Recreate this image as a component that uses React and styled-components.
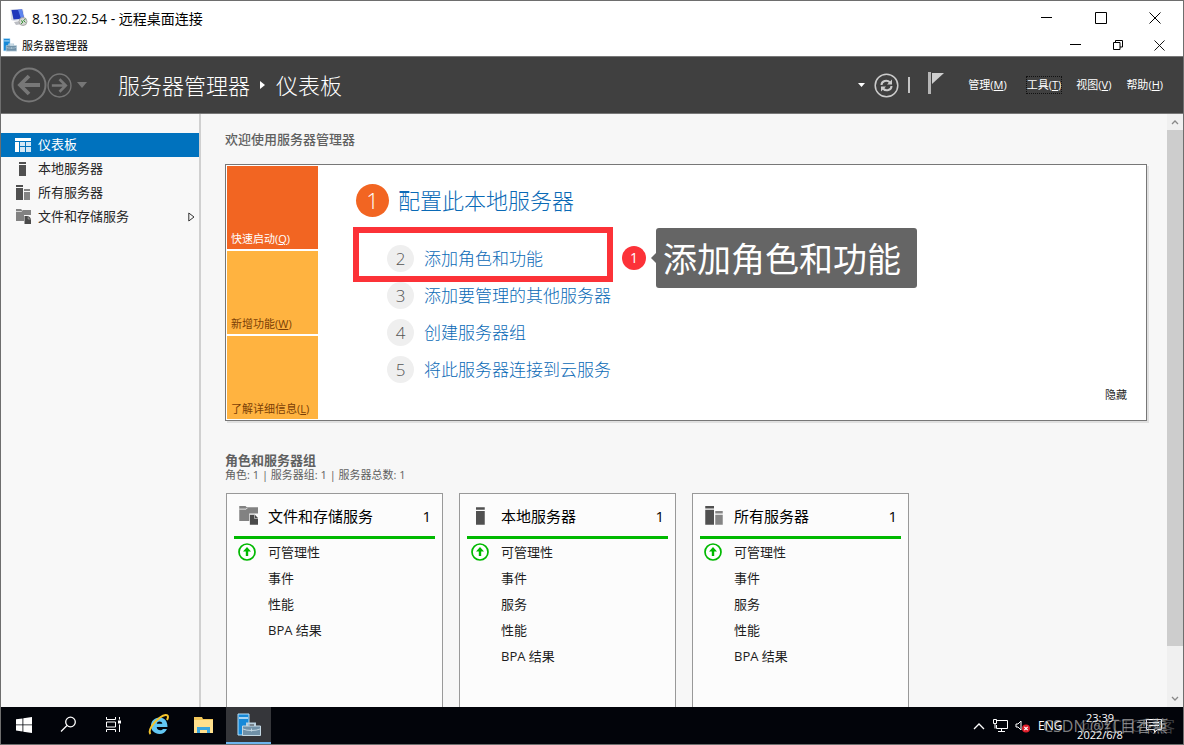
import React from 'react';
import styled, { createGlobalStyle, css } from 'styled-components';

const GlobalStyle = createGlobalStyle`
  *, *::before, *::after { box-sizing: border-box; }
  body {
    margin: 0;
    background: #f7f7f7;
    color: #1e1e1e;
    font-family: "Open Sans", "Noto Sans CJK SC", sans-serif;
    font-size: 13px;
  }
  button {
    border: 0;
    padding: 0;
    background: none;
    color: inherit;
    font: inherit;
    cursor: pointer;
  }
  a { color: inherit; text-decoration: none; }
  svg { display: block; flex: none; }
  h1, h2, h3, p, ul, ol { margin: 0; padding: 0; font-weight: 400; }
  ul, ol { list-style: none; }
`;

/* ---------- window frame ---------- */

const Window = styled.div`
  display: flex;
  flex-direction: column;
  height: 100vh;
  border: 1px solid #6e6e6e;
  overflow: hidden;
`;

const TitleBar = styled.div`
  display: flex;
  align-items: center;
  flex: none;
  height: 34px;
  padding: 0 22px 1px 8px;
  gap: 4px;
  background: #fff;
  color: #000;
  font-size: 14px;
`;

const AppBar = styled(TitleBar)`
  height: 21px;
  padding: 0 18px 1px 2px;
  gap: 5px;
  font-size: 11px;
`;

const WindowButtons = styled.div`
  display: flex;
  align-items: center;
  gap: ${(p) => p.$gap};
  margin-left: auto;
`;

/* ---------- dark header ---------- */

const Header = styled.header`
  display: flex;
  align-items: center;
  flex: none;
  height: 58px;
  padding: 0 20px 0 10px;
  border-top: 1px solid #777;
  border-bottom: 1px solid #777;
  background: #404040;
  color: #fff;
`;

const HistoryButtons = styled.div`
  display: flex;
  align-items: center;
`;

const Breadcrumb = styled.h1`
  display: flex;
  align-items: center;
  gap: 10px;
  margin-left: 31px;
  font-size: 22px;
  line-height: 32px;
  font-weight: 300;
`;

const HeaderTools = styled.div`
  display: flex;
  align-items: center;
  gap: 9px;
  margin-left: auto;
`;

const Divider = styled.span`
  width: 2px;
  height: 16px;
  background: #c4c4c4;
`;

const FlagButton = styled.button`
  margin: 0 15px 4px 9px;
`;

const Menu = styled.nav`
  display: flex;
  gap: 15px;
`;

const MenuButton = styled.button`
  font-size: 11px;
  line-height: 16px;
  outline: ${(p) => (p.$focused ? '1px dotted #111' : 'none')};
  margin-left: ${(p) => (p.$focused ? '5px' : '0')};
`;

/* ---------- body ---------- */

const Body = styled.div`
  display: flex;
  flex: 1;
  min-height: 0;
`;

const Sidebar = styled.nav`
  flex: none;
  width: 200px;
  padding-top: 19px;
  border-right: 2px solid #d0d0d0;
  background: #f8f8f8;
`;

const NavLink = styled.a`
  display: flex;
  align-items: center;
  gap: 7px;
  height: 24px;
  padding: 0 4px 0 14px;
  background: ${(p) => (p.$active ? '#0072be' : 'transparent')};
  color: ${(p) => (p.$active ? '#fff' : '#262626')};
  > svg:last-child { margin-left: auto; }
`;

const NavLabel = styled.span`
  padding-bottom: 2px;
  line-height: 20px;
`;

const Main = styled.main`
  display: flex;
  flex: 1;
  flex-direction: column;
  min-width: 0;
  padding: 16px 20px 0 24px;
`;

const SectionTitle = styled.h2`
  color: #606060;
  font-size: 13px;
  line-height: 18px;
  font-weight: ${(p) => (p.$bold ? 700 : 500)};
`;

const Summary = styled.p`
  color: #606060;
  font-size: 11px;
  line-height: 12px;
`;

const Welcome = styled.section`
  display: flex;
  flex: none;
  margin: 16px 0 30px;
  padding: 1px;
  border: 1px solid #777;
  box-shadow: 2px 2px 0 #e0e0e0;
  background: #fff;
`;

const Tiles = styled.div`
  display: flex;
  flex: none;
  flex-direction: column;
  gap: 2px;
  width: 91px;
`;

const Tile = styled.button`
  display: flex;
  align-items: flex-end;
  height: 83px;
  padding: 0 4px 2px;
  background: ${(p) => (p.$active ? '#f26522' : '#ffb340')};
  color: ${(p) => (p.$active ? '#fff' : '#7b3f06')};
  font-size: 11px;
  line-height: 16px;
`;

const Steps = styled.ol`
  flex: 1;
  padding: 16px 0 0 38px;
`;

const Step = styled.li`
  position: relative;
  display: flex;
  align-items: center;
  gap: ${(p) => (p.$primary ? '9px' : '10px')};
  height: ${(p) => (p.$primary ? '36px' : '37px')};
  margin-left: ${(p) => (p.$primary ? '0' : '31px')};
  margin-bottom: ${(p) => (p.$primary ? '22px' : '0')};
`;

const StepNumber = styled.span`
  display: flex;
  align-items: center;
  justify-content: center;
  flex: none;
  border-radius: 50%;
  font-weight: 300;
  ${(p) =>
    p.$primary
      ? css`
          width: 33px;
          height: 33px;
          background: #f26522;
          color: #fff;
          font-size: 22px;
        `
      : css`
          width: 27px;
          height: 27px;
          background: #efefef;
          color: #555;
          font-size: 17px;
        `}
`;

const StepLink = styled.a`
  color: #0a6ab6;
  font-size: ${(p) => (p.$primary ? '22px' : '17px')};
  line-height: 32px;
  font-weight: 300;
`;

const HideButton = styled.button`
  align-self: flex-end;
  margin: 0 18px 16px 0;
  font-size: 11px;
  line-height: 16px;
`;

/* ---------- annotation over the second step ---------- */

const Highlight = styled.span`
  position: absolute;
  top: -13px;
  left: -34px;
  width: 260px;
  height: 55px;
  border: 6px solid #fc3238;
  pointer-events: none;
`;

const Callout = styled.div`
  position: absolute;
  top: -12px;
  left: 235px;
  display: flex;
  align-items: center;
  pointer-events: none;
`;

const CalloutNumber = styled.span`
  width: 24px;
  height: 24px;
  margin-right: 5px;
  border-radius: 50%;
  background: #fc3238;
  color: #fff;
  font-size: 14px;
  line-height: 23px;
  text-align: center;
`;

const CalloutArrow = styled.span`
  border: 5px solid transparent;
  border-left: 0;
  border-right-color: #656565;
`;

const CalloutText = styled.span`
  height: 60px;
  padding: 0 16px 0 7px;
  border-radius: 3px;
  background: #656565;
  color: #fff;
  font-size: 34px;
  line-height: 62px;
  white-space: nowrap;
`;

/* ---------- role cards ---------- */

const Cards = styled.div`
  display: flex;
  flex: 1;
  gap: 16px;
  min-height: 0;
  margin: 12px 0 0 1px;
`;

const Card = styled.section`
  width: 217px;
  padding: 0 7px;
  border: 1px solid #999;
  border-bottom: 0;
  background: #fcfcfc;
`;

const CardHeader = styled.header`
  display: flex;
  align-items: center;
  height: 45px;
  padding: 2px 4px 0;
  border-bottom: 3px solid #00b900;
  color: #000;
  font-size: 15px;
  line-height: 20px;
`;

const IconSlot = styled.span`
  display: flex;
  flex: none;
  width: 30px;
`;

const CardTitle = styled.h3`
  flex: 1;
  font-size: 15px;
`;

const CardRow = styled.li`
  display: flex;
  align-items: center;
  height: 26px;
  padding-left: 4px;
  line-height: 20px;
`;

/* ---------- scroll bar ---------- */

const ScrollBar = styled.div`
  display: flex;
  flex: none;
  flex-direction: column;
  width: 16px;
  background: #f0f0f0;
`;

const ScrollArrow = styled.button`
  display: flex;
  align-items: center;
  justify-content: center;
  height: 16px;
`;

const ScrollTrack = styled.div`
  flex: 1;
`;

const ScrollThumb = styled.div`
  height: 92%;
  background: #cdcdcd;
`;

/* ---------- task bar ---------- */

const TaskBar = styled.footer`
  position: relative;
  display: flex;
  flex: none;
  height: 37px;
  background: #02040a;
  color: #fff;
`;

const TaskButton = styled.button`
  display: flex;
  align-items: center;
  justify-content: center;
  width: 45px;
  border-bottom: 2px solid ${(p) => (p.$active ? '#6cb5ee' : 'transparent')};
  background: ${(p) => (p.$active ? '#35363a' : 'transparent')};
`;

const Tray = styled.div`
  display: flex;
  align-items: center;
  gap: 7px;
  margin-left: auto;
  padding-right: 20px;
  font-size: 12px;
`;

const Language = styled.span`
  width: 26px;
`;

const Clock = styled.div`
  display: flex;
  flex-direction: column;
  align-items: center;
  width: 58px;
  font-size: 11px;
  line-height: 17px;
`;

const TrayNotice = styled.span`
  margin-left: 10px;
`;

const Watermark = styled.span`
  position: absolute;
  top: 7px;
  right: ${(p) => p.$right};
  color: ${(p) => p.$tone};
  font-size: 16px;
  line-height: 24px;
  white-space: nowrap;
  pointer-events: none;
`;

/* ---------- icons ---------- */

const MinimizeIcon = () => (
  <svg width="12" height="12" viewBox="0 0 12 12"><path d="M0 5.5H11" stroke="#000" /></svg>
);
const MaximizeIcon = () => (
  <svg width="12" height="12" viewBox="0 0 12 12"><path d="M.5.5h11v11H.5z" fill="none" stroke="#000" /></svg>
);
const RestoreIcon = () => (
  <svg width="10" height="10" viewBox="0 0 10 10">
    <path d="M.5 2.500h6.500v7H.5zM2.500 2.500V.5h7v6.500H7" fill="none" stroke="#000" />
  </svg>
);
const CloseIcon = ({ size }) => (
  <svg width={size} height={size} viewBox="0 0 12 12"><path d="M.5.5l11 11M11.500.5l-11 11" stroke="#000" fill="none" /></svg>
);

const RemoteIcon = () => (
  <svg width="19" height="19" viewBox="0 0 19 19">
    <path d="M1.500 1.500L14 1l2 10.500-11 1.500-3-1z" fill="#d9dce6" />
    <path d="M2.500 2l10.500-.5 2 9-10.500 1z" fill="#2037bb" />
    <path d="M9 1.700l4-.2 2 9-3 .3z" fill="#5d84ee" />
    <path d="M5 14l6-1 2 3-6 1z" fill="#bcbec4" />
    <circle cx="14" cy="13.500" r="4" fill="#d4d7d3" stroke="#999" strokeWidth=".8" />
    <path d="M12 12.500l2 1.500-2 2M16.500 11l-2 1.500 2 2" stroke="#40973e" fill="none" />
  </svg>
);

const ServerManagerIcon = ({ size }) => (
  <svg width={size} height={size} viewBox="0 0 24 24">
    <path d="M1 1h11v21H1z" fill="#1689d8" stroke="#b8dff7" />
    <path d="M2 5h9" stroke="#d8effd" strokeWidth="1.500" />
    <path d="M10 13V10.500h8V13" fill="none" stroke="#b9d0de" strokeWidth="2" />
    <path d="M5.500 13h18v9.500h-18z" fill="#7091a8" stroke="#c3d7e2" />
    <path d="M6 16c4 2 13 2 17 0M14.500 15.500v3" fill="none" stroke="#c3d7e2" />
  </svg>
);

const CircleArrow = ({ size, flip, color }) => (
  <svg width={size} height={size} viewBox="0 0 36 36">
    <circle cx="18" cy="18" r="16.500" fill="none" stroke={color} strokeWidth="2" />
    <path
      d={flip ? 'M7 18h20M18 9l9 9-9 9' : 'M29 18H9M18 9l-9 9 9 9'}
      fill="none" stroke={color} strokeWidth="3.800"
    />
  </svg>
);

const Caret = ({ color, size = 8 }) => (
  <svg width={size} height={size > 8 ? 6 : 4} viewBox="0 0 8 5" preserveAspectRatio="none">
    <path d="M0 0h8L4 5z" fill={color} />
  </svg>
);

const HistoryCaret = styled.button`
  margin-left: 5px;
`;

const RefreshIcon = () => (
  <svg width="25" height="25" viewBox="0 0 25 25" fill="none" stroke="#ccc">
    <circle cx="12.500" cy="12.500" r="11.300" strokeWidth="1.500" />
    <path d="M7.500 12c0-4 5.500-6 8.500-2.500M17.500 13c0 4-5.500 6-8.500 2.500" strokeWidth="2" />
    <path d="M18 6.500v5h-5zM7 18.500v-5h5z" fill="#ccc" stroke="none" />
  </svg>
);

const FlagIcon = () => (
  <svg width="16" height="23" viewBox="0 0 16 23">
    <path d="M0 0h3v22H0z" fill="#b5b5b5" /><path d="M4 1h12L4 12z" fill="#cfcfcf" />
  </svg>
);

const DashboardIcon = () => (
  <svg width="16" height="16" viewBox="0 0 16 16" fill="#fff">
    <path d="M0 1h16v3H0zM0 5h4v10H0z" />
    <path d="M5 5h5v4H5zM11 5h5v4h-5zM5 10h5v5H5zM11 10h5v5h-5z" fill="#d5e8f5" />
  </svg>
);
const ServerIcon = ({ size = 16 }) => (
  <svg width={size} height={size} viewBox="0 0 16 16" fill="#505050">
    <path d="M4 1h7v2H4zM4 4h7v11H4z" />
  </svg>
);
const ServersIcon = ({ size = 16 }) => (
  <svg width={size} height={size} viewBox="0 0 16 16">
    <path d="M1 0h7v2H1zM1 3h7v12H1z" fill="#505050" />
    <path d="M9 4h6v2H9zM9 7h6v8H9z" fill="#858585" />
  </svg>
);
const StorageIcon = ({ size = 16 }) => (
  <svg width={size} height={size} viewBox="0 0 16 16">
    <path d="M1 0h5l1 1h9v5H9v6H1z" fill="#828282" />
    <path d="M1 2.500h5.500l1-1" fill="none" stroke="#e8e8e8" strokeWidth=".8" />
    <path d="M9.500 7h4l2.500 2.500V15H9.500z" fill="#4a4a4a" />
    <path d="M13.200 7v3H16" fill="none" stroke="#ddd" strokeWidth=".5" />
  </svg>
);
const ExpandIcon = () => (
  <svg width="7" height="10" viewBox="0 0 7 10"><path d="M.8 1v8L6 5z" fill="none" stroke="#333" /></svg>
);
const BreadcrumbArrow = () => (
  <svg width="6" height="8" viewBox="0 0 6 8"><path d="M0 0l5 4-5 4z" fill="#fff" /></svg>
);
const UpIcon = () => (
  <svg width="18" height="18" viewBox="0 0 18 18">
    <circle cx="9" cy="9" r="8" fill="#fff" stroke="#00b900" strokeWidth="1.700" />
    <path d="M9 4l4 4.500h-2.800V13H7.800V8.500H5z" fill="#00b900" />
  </svg>
);
const Chevron = ({ down }) => (
  <svg width="8" height="6" viewBox="0 0 8 6">
    <path d={down ? 'M1 1l3 3 3-3' : 'M1 5l3-3 3 3'} fill="none" stroke="#888" strokeWidth="1.300" />
  </svg>
);

const WindowsIcon = () => (
  <svg width="16" height="16" viewBox="0 0 16 16" fill="#fff">
    <path d="M0 2.300L6.500 1.400v6.100H0zM7.300 1.300L16 0v7.500H7.300zM0 8.300h6.500v6.200L0 13.600zM7.300 8.300H16V16l-8.700-1.300z" />
  </svg>
);
const SearchIcon = () => (
  <svg width="17" height="17" viewBox="0 0 17 17" fill="none" stroke="#fff" strokeWidth="1.300">
    <circle cx="10.500" cy="6" r="4.800" /><path d="M7 9.500l-6 6" />
  </svg>
);
const TaskViewIcon = () => (
  <svg width="16" height="15" viewBox="0 0 16 15" fill="none" stroke="#fff">
    <path d="M.5 0v2.500h9V0M.5 5h9v5h-9zM.5 15v-2.500h9V15M13.500 0v2.500M13.500 7.500V15" />
    <path d="M12 3.500h3v3h-3z" fill="#fff" stroke="none" />
  </svg>
);
const ExplorerIcon = () => (
  <svg width="21" height="18" viewBox="0 0 21 18">
    <path d="M1 1h8l1 2h10v14H1z" fill="#f2c75a" />
    <path d="M1 4h19v13H1z" fill="#ffe08d" />
    <path d="M4 17v-6h13v6h-3v-3H7v3z" fill="#39a6df" />
  </svg>
);
const BrowserIcon = () => (
  <svg width="22" height="22" viewBox="0 0 22 22" fill="none">
    <path d="M19 15c-1.300 3-4 5-7.500 5C6.500 20 3 16.500 3 11.800S6.500 3.500 11.500 3.500s8 3.500 8 9.500H8.700c.3 4 5 4 6.300 2z" fill="#62c7f3" />
    <path d="M8.800 9.800c.3-3 5.200-3 5.500 0z" fill="#02040a" />
    <path d="M2.500 20c-3-3 3-12 9.500-16.500 4-2.700 8-3.500 8-.5 0 1-.5 2-1 3" stroke="#f4c52d" strokeWidth="2" />
  </svg>
);

const TrayUpIcon = () => (
  <svg width="12" height="8" viewBox="0 0 12 8"><path d="M1 7l5-5 5 5" fill="none" stroke="#fff" strokeWidth="1.300" /></svg>
);
const NetworkIcon = () => (
  <svg width="16" height="14" viewBox="0 0 16 14" fill="none" stroke="#fff">
    <path d="M5 1.500h10.500v8H4.500V6M9.500 9.500v3M6 12.500h7M1.500.5h3v4h-3zM3 4.500v5" />
  </svg>
);
const VolumeIcon = () => (
  <svg width="16" height="14" viewBox="0 0 16 14">
    <path d="M1 5h2l3-3v9L3 8H1z" fill="none" stroke="#fff" />
    <circle cx="11" cy="9.500" r="4" fill="#df1f2b" />
    <path d="M9.300 7.800l3.400 3.400M12.700 7.800l-3.400 3.400" stroke="#fff" strokeWidth="1.200" />
  </svg>
);
const NotificationIcon = () => (
  <svg width="17" height="16" viewBox="0 0 17 16" fill="none" stroke="#fff">
    <path d="M.5 1.500h15v10h-4l-3 3v-3h-8zM3 4.500h10M3 7.500h10" />
  </svg>
);

/* ---------- content ---------- */

const menus = [
  { label: '管理', accessKey: 'M' },
  { label: '工具', accessKey: 'T', focused: true },
  { label: '视图', accessKey: 'V' },
  { label: '帮助', accessKey: 'H' },
];

const navItems = [
  { label: '仪表板', Icon: DashboardIcon, active: true },
  { label: '本地服务器', Icon: ServerIcon },
  { label: '所有服务器', Icon: ServersIcon },
  { label: '文件和存储服务', Icon: StorageIcon, expandable: true },
];

const tiles = [
  { label: '快速启动', accessKey: 'Q', active: true },
  { label: '新增功能', accessKey: 'W' },
  { label: '了解详细信息', accessKey: 'L' },
];

const steps = ['配置此本地服务器', '添加角色和功能', '添加要管理的其他服务器', '创建服务器组', '将此服务器连接到云服务'];

const cards = [
  { title: '文件和存储服务', Icon: StorageIcon, rows: ['可管理性', '事件', '性能', 'BPA 结果'] },
  { title: '本地服务器', Icon: ServerIcon, rows: ['可管理性', '事件', '服务', '性能', 'BPA 结果'] },
  { title: '所有服务器', Icon: ServersIcon, rows: ['可管理性', '事件', '服务', '性能', 'BPA 结果'] },
];

const taskButtons = [
  { label: '开始', icon: <WindowsIcon /> },
  { label: '搜索', icon: <SearchIcon /> },
  { label: '任务视图', icon: <TaskViewIcon /> },
  { label: 'Internet Explorer', icon: <BrowserIcon /> },
  { label: '文件资源管理器', icon: <ExplorerIcon /> },
  { label: '服务器管理器', icon: <ServerManagerIcon size={24} />, active: true },
];

const AccessLabel = ({ label, accessKey }) => (
  <span>{label}(<u>{accessKey}</u>)</span>
);

export default function App() {
  return (
    <Window>
      <GlobalStyle />
      <TitleBar>
        <RemoteIcon />
        <span>8.130.22.54 - 远程桌面连接</span>
        <WindowButtons $gap="42px">
          <button aria-label="最小化"><MinimizeIcon /></button>
          <button aria-label="最大化"><MaximizeIcon /></button>
          <button aria-label="关闭"><CloseIcon size={12} /></button>
        </WindowButtons>
      </TitleBar>
      <AppBar>
        <ServerManagerIcon size={14} />
        <span>服务器管理器</span>
        <WindowButtons $gap="31px">
          <button aria-label="最小化"><MinimizeIcon /></button>
          <button aria-label="还原"><RestoreIcon /></button>
          <button aria-label="关闭"><CloseIcon size={11} /></button>
        </WindowButtons>
      </AppBar>
      <Header>
        <HistoryButtons>
          <button aria-label="后退"><CircleArrow size={36} color="#777" /></button>
          <button aria-label="前进"><CircleArrow size={25} color="#777" flip /></button>
          <HistoryCaret aria-label="历史记录"><Caret color="#777" size={10} /></HistoryCaret>
        </HistoryButtons>
        <Breadcrumb>
          <span>服务器管理器</span>
          <BreadcrumbArrow />
          <span>仪表板</span>
        </Breadcrumb>
        <HeaderTools>
          <button aria-label="刷新选项"><Caret color="#fff" size={7} /></button>
          <button aria-label="刷新"><RefreshIcon /></button>
          <Divider />
          <FlagButton aria-label="通知"><FlagIcon /></FlagButton>
          <Menu>
            {menus.map((m) => (
              <MenuButton key={m.label} $focused={m.focused}><AccessLabel {...m} /></MenuButton>
            ))}
          </Menu>
        </HeaderTools>
      </Header>
      <Body>
        <Sidebar>
          {navItems.map(({ label, Icon, active, expandable }) => (
            <NavLink key={label} href="#" $active={active}>
              <Icon />
              <NavLabel>{label}</NavLabel>
              {expandable && <ExpandIcon />}
            </NavLink>
          ))}
        </Sidebar>
        <Main>
          <SectionTitle>欢迎使用服务器管理器</SectionTitle>
          <Welcome>
            <Tiles>
              {tiles.map((t) => (
                <Tile key={t.label} $active={t.active}><AccessLabel {...t} /></Tile>
              ))}
            </Tiles>
            <Steps>
              {steps.map((label, i) => (
                <Step key={label} $primary={i === 0}>
                  <StepNumber $primary={i === 0}>{i + 1}</StepNumber>
                  <StepLink href="#" $primary={i === 0}>{label}</StepLink>
                  {i === 1 && (
                    <>
                      <Highlight />
                      <Callout>
                        <CalloutNumber>1</CalloutNumber>
                        <CalloutArrow />
                        <CalloutText>添加角色和功能</CalloutText>
                      </Callout>
                    </>
                  )}
                </Step>
              ))}
            </Steps>
            <HideButton>隐藏</HideButton>
          </Welcome>
          <SectionTitle $bold>角色和服务器组</SectionTitle>
          <Summary>角色: 1 | 服务器组: 1 | 服务器总数: 1</Summary>
          <Cards>
            {cards.map(({ title, Icon, rows }) => (
              <Card key={title}>
                <CardHeader>
                  <IconSlot><Icon size={20} /></IconSlot>
                  <CardTitle>{title}</CardTitle>
                  <span>1</span>
                </CardHeader>
                <ul>
                  {rows.map((row, i) => (
                    <CardRow key={row}>
                      <IconSlot>{i === 0 && <UpIcon />}</IconSlot>
                      <span>{row}</span>
                    </CardRow>
                  ))}
                </ul>
              </Card>
            ))}
          </Cards>
        </Main>
        <ScrollBar>
          <ScrollArrow aria-label="向上滚动"><Chevron /></ScrollArrow>
          <ScrollTrack><ScrollThumb /></ScrollTrack>
          <ScrollArrow aria-label="向下滚动"><Chevron down /></ScrollArrow>
        </ScrollBar>
      </Body>
      <TaskBar>
        {taskButtons.map((b) => (
          <TaskButton key={b.label} aria-label={b.label} $active={b.active}>{b.icon}</TaskButton>
        ))}
        <Tray>
          <TrayUpIcon />
          <NetworkIcon />
          <VolumeIcon />
          <Language>ENG</Language>
          <Clock><span>23:39</span><span>2022/6/8</span></Clock>
          <TrayNotice><NotificationIcon /></TrayNotice>
        </Tray>
        <Watermark $right="8px" $tone="rgba(150, 150, 150, 0.4)">@51CTO博客</Watermark>
        <Watermark $right="15px" $tone="rgba(200, 200, 200, 0.65)">CSDN @红目香薰</Watermark>
      </TaskBar>
    </Window>
  );
}
